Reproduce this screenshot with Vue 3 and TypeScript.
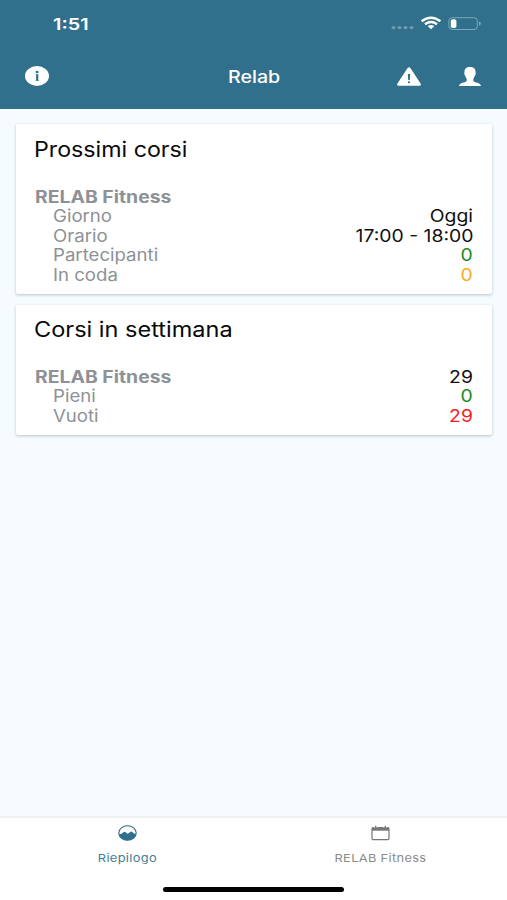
<script setup lang="ts">
interface Row {
  label: string
  value?: string
  tone?: 'green' | 'orange' | 'red'
  heading?: boolean
}

interface Card {
  title: string
  rows: Row[]
}

const cards: Card[] = [
  {
    title: 'Prossimi corsi',
    rows: [
      { label: 'RELAB Fitness', heading: true },
      { label: 'Giorno', value: 'Oggi' },
      { label: 'Orario', value: '17:00 - 18:00' },
      { label: 'Partecipanti', value: '0', tone: 'green' },
      { label: 'In coda', value: '0', tone: 'orange' },
    ],
  },
  {
    title: 'Corsi in settimana',
    rows: [
      { label: 'RELAB Fitness', value: '29', heading: true },
      { label: 'Pieni', value: '0', tone: 'green' },
      { label: 'Vuoti', value: '29', tone: 'red' },
    ],
  },
]
</script>

<template>
  <div class="screen">
    <header class="top">
      <div class="status">
        <span class="clock wide">1:51</span>
        <svg class="status-icons" width="92" height="18" viewBox="0 0 92 18">
          <g fill="#6f9ab0">
            <ellipse cx="3.5" cy="12.6" rx="2" ry="1.7" />
            <ellipse cx="9.5" cy="12.6" rx="2" ry="1.7" />
            <ellipse cx="15.5" cy="12.6" rx="2" ry="1.7" />
            <ellipse cx="21.5" cy="12.6" rx="2" ry="1.7" />
          </g>
          <g fill="none" stroke="#fff" stroke-width="2.4">
            <path d="M31.6 6.2Q41 -.9 50.4 6.2" />
            <path d="M35 9.2Q41 4.8 47 9.2" />
          </g>
          <path d="M37.6 11.1Q41 8.8 44.4 11.1L41 14.2Z" fill="#fff" />
          <rect x="58.9" y="2.7" width="28.4" height="11.8" rx="3.4" ry="3" fill="none" stroke="#7fa6ba" />
          <rect x="60.8" y="4.2" width="5.6" height="8.8" rx="1.8" fill="#fff" />
          <path d="M89 6.6Q90.9 7 90.9 8.6Q90.9 10.1 89 10.5Z" fill="#7fa6ba" />
        </svg>
      </div>
      <nav class="bar">
        <svg class="info" width="24" height="20" viewBox="0 0 24 20">
          <ellipse cx="12" cy="10" rx="12" ry="10" fill="#fff" />
          <ellipse cx="12.1" cy="6" rx="1.5" ry="1.2" fill="#31708c" />
          <path d="M10.6 8.2H13.3V14H14V14.8H10.5V14H11.1V9H10.6Z" fill="#31708c" />
        </svg>
        <span class="nav-title wide">Relab</span>
        <svg class="alert" width="24" height="19" viewBox="0 0 24 19">
          <path d="M10.6 1Q12 -.7 13.4 1L23.7 16.7Q24.4 18.7 22.3 18.8H1.7Q-.4 18.7 .3 16.7Z" fill="#fff" />
          <path d="M10.8 7H13.2L12.8 13.1H11.2Z" fill="#31708c" />
          <ellipse cx="12" cy="15.3" rx="1.2" ry="1" fill="#31708c" />
        </svg>
        <svg class="person" width="22" height="19" viewBox="0 0 22 19">
          <path d="M11 0C7.2 0 5.3 2 5.5 5.1C5.5 6 5.1 6.2 5.3 7.1C5.4 8 6.1 8.3 6.3 9.1C6.5 10.4 7.2 11 7.6 11.7C7.9 13.1 7.7 14.3 6.7 14.8C4 16.2 .7 15.8 0 19H22C21.3 15.8 18 16.2 15.3 14.8C14.3 14.3 14.1 13.1 14.4 11.7C14.8 11 15.5 10.4 15.7 9.1C15.9 8.3 16.6 8 16.7 7.1C16.9 6.2 16.5 6 16.5 5.1C16.7 2 14.8 0 11 0Z" fill="#fff" />
        </svg>
      </nav>
    </header>

    <main class="content">
      <section v-for="card in cards" :key="card.title" class="card">
        <h2><span class="wide">{{ card.title }}</span></h2>
        <div v-for="row in card.rows" :key="row.label" class="row" :class="{ heading: row.heading }">
          <span class="label wide">{{ row.label }}</span>
          <span v-if="row.value" class="value wide" :class="row.tone">{{ row.value }}</span>
        </div>
      </section>
    </main>

    <footer class="tabs">
      <div class="tab active">
        <svg width="19" height="16" viewBox="0 0 19 16">
          <ellipse cx="9.5" cy="8" rx="8.7" ry="7.2" fill="#fff" stroke="#31708c" stroke-width="1.1" />
          <path d="M.8 9.2L3.2 9L5.4 7.2Q6.8 6.2 8 7.6Q9.3 9.6 10.9 8L12.2 6.9Q13.4 6 14.6 7.2L16.4 8.8H18.2C17.8 12.6 14 15.2 9.5 15.2C5 15.2 1.2 12.6 .8 9.2Z" fill="#31708c" />
        </svg>
        <span class="wide">Riepilogo</span>
      </div>
      <div class="tab">
        <svg width="19" height="16" viewBox="0 0 19 16">
          <rect x="1" y="2.5" width="17" height="12.1" rx="1.3" fill="#fff" stroke="#777" stroke-width="1.2" />
          <path d="M1 2.5H18V5.7H1Z" fill="#777" />
          <path d="M3.4 2.8V1.9M6 2.8V1.9M13 2.8V1.9M15.6 2.8V1.9" stroke="#fff" stroke-width=".8" />
          <path d="M4.7 .8V3M14.3 .8V3" stroke="#777" stroke-width="1.3" />
        </svg>
        <span class="wide">RELAB Fitness</span>
      </div>
      <div class="home"></div>
    </footer>
  </div>
</template>

<style>
body {
  margin: 0;
}
</style>

<style scoped>
.screen {
  width: 507px;
  height: 900px;
  display: flex;
  flex-direction: column;
  overflow: hidden;
  background: #f5fbfe;
  color: #111;
  font-family: Inter, "Liberation Sans", sans-serif;
}
.wide {
  display: inline-block;
  white-space: nowrap;
  transform: scaleX(1.105);
  transform-origin: left center;
}
.top {
  box-sizing: border-box;
  height: 109px;
  flex: none;
  background: #31708c;
  color: #fff;
}
.status {
  display: flex;
  align-items: center;
  justify-content: space-between;
  height: 30px;
  padding: 9px 25px 0 53px;
}
.clock.wide {
  font-size: 16px;
  font-weight: 600;
  transform: scaleX(1.24);
}
.bar {
  display: grid;
  grid-template-columns: 203px 1fr 24px 60px;
  align-items: center;
  height: 74px;
  padding: 0 26px 0 25px;
}
.nav-title.wide {
  font-size: 17px;
  line-height: 21px;
  padding-top: 2px;
  font-weight: 450;
  justify-self: start;
  transform: scaleX(1.155);
}
.person {
  justify-self: end;
}
.content {
  flex: 1;
  display: flex;
  flex-direction: column;
  gap: 11px;
  padding: 15px 15px 0 16px;
}
.card {
  padding: 0 19px 8.7px;
  background: #fff;
  border-radius: 2px;
  box-shadow: 0 1px 3px rgba(60, 80, 90, 0.32);
}
h2 {
  margin: 0 0 0 -1px;
  height: 64px;
  font-size: 21px;
  line-height: 52px;
  font-weight: 400;
  color: #0a0a0a;
}
.card + .card h2 {
  height: 63px;
  line-height: 50px;
}
.card + .card h2 .wide {
  transform: scaleX(1.12);
}
.row {
  display: flex;
  justify-content: space-between;
  padding-left: 18px;
  font-size: 17px;
  line-height: 19.45px;
  height: 19.45px;
}
.row.heading {
  padding-left: 0;
}
.label.wide {
  color: #8e9195;
  transform: scaleX(1.095);
}
.heading .label.wide {
  font-weight: 700;
  transform: scaleX(1.14);
}
.value.wide {
  transform: scaleX(1.14);
  transform-origin: right center;
}
.green {
  color: #1f8a1f;
}
.orange {
  color: #fba91c;
}
.red {
  color: #f51d1d;
}
.tabs {
  box-sizing: border-box;
  height: 84px;
  flex: none;
  display: grid;
  grid-template-columns: 1fr 1fr;
  grid-template-rows: 69px 5px;
  padding-left: 1px;
  background: #fff;
  border-top: 2px solid #edf1f2;
}
.tab {
  display: flex;
  flex-direction: column;
  align-items: center;
  padding-top: 7px;
  gap: 9px;
  color: #8b8b8b;
  font-size: 11px;
  line-height: 16px;
}
.tab .wide {
  transform: scaleX(1.165);
  transform-origin: center;
  letter-spacing: 0.3px;
}
.tab.active {
  color: #437e97;
}
.home {
  grid-column: 1 / 3;
  justify-self: center;
  width: 181px;
  height: 5px;
  margin-right: 1px;
  border-radius: 3px;
  background: #000;
}
</style>
